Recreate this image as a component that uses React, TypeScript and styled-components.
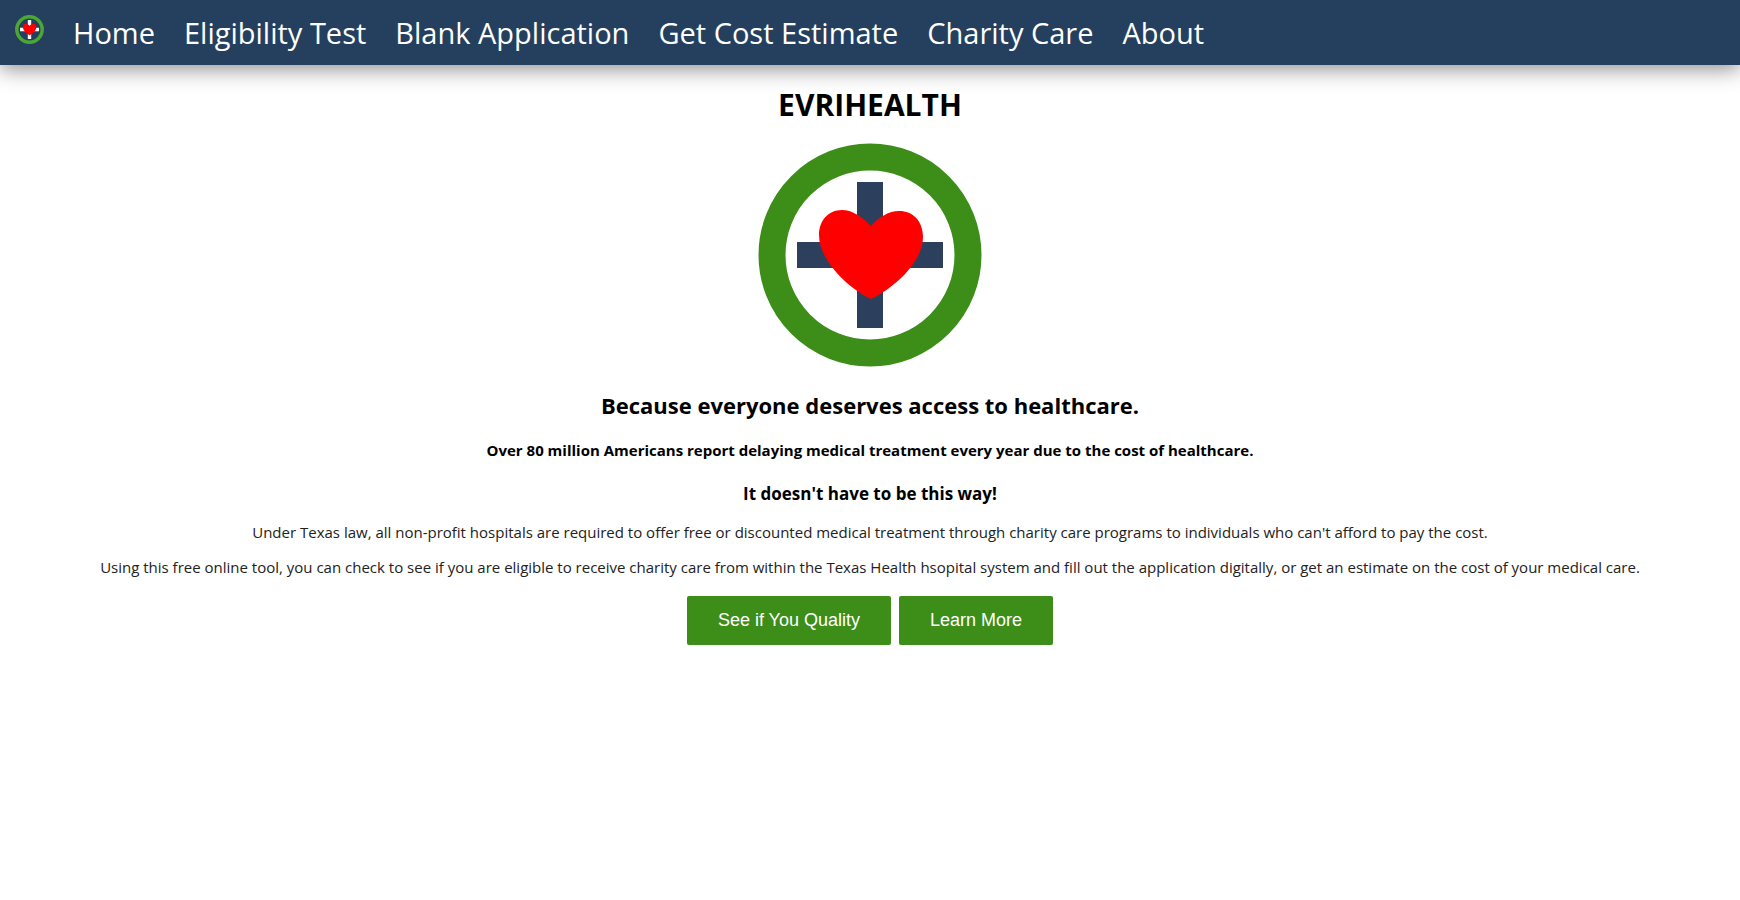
import React from "react";
import styled, { createGlobalStyle } from "styled-components";

const GlobalStyle = createGlobalStyle`
  body {
    margin: 0;
    background: #fff;
    color: #000;
    font-family: "Open Sans", sans-serif;
    font-size: 16px;
  }
`;

const NavBar = styled.nav`
  display: flex;
  align-items: center;
  height: 65px;
  padding: 0 15px;
  background: #24405e;
  box-shadow: 0 4px 20px rgba(0, 0, 0, 0.45);
`;

const BrandLink = styled.a`
  display: flex;
  margin: 0 29px 6px 0;
`;

const NavList = styled.ul`
  display: flex;
  gap: 29px;
  margin: 0;
  padding: 0;
  list-style: none;
`;

const NavLink = styled.a`
  color: #fff;
  font-size: 29px;
  line-height: 40px;
  text-decoration: none;
  white-space: nowrap;
`;

const Main = styled.main`
  display: flex;
  flex-direction: column;
  align-items: center;
  padding: 18px 8px;
  text-align: center;
`;

const Title = styled.h1`
  margin: 0 0 16px;
  font-size: 30px;
  line-height: 44px;
`;

const Tagline = styled.h2`
  margin: 23px 0 0;
  font-size: 22px;
  line-height: 30px;
`;

const Fact = styled.h4`
  margin: 19px 0 0;
  font-size: 15px;
  line-height: 22px;
`;

const Callout = styled.h3`
  margin: 19px 0 0;
  font-size: 17px;
  line-height: 27px;
`;

const Text = styled.p`
  margin: 15px 0 0;
  color: #222;
  font-size: 15px;
  line-height: 20px;
`;

const Actions = styled.div`
  display: flex;
  gap: 8px;
  margin-top: 19px;
`;

const ActionButton = styled.button`
  padding: 14px 31px;
  border: 0;
  border-radius: 2px;
  background: #3c8e18;
  color: #fff;
  font-family: "Liberation Sans", Arial, sans-serif;
  font-size: 18px;
  line-height: 21px;
  cursor: pointer;
`;

interface LogoProps {
  size: number;
  ring: string;
  cross: string;
}

function Logo({ size, ring, cross }: LogoProps) {
  return (
    <svg width={size} height={size} viewBox="0 0 224 224" role="img" aria-label="EvriHealth">
      <circle cx="112" cy="112" r="98" fill="none" stroke={ring} strokeWidth="27" />
      <path d="M99 39h26v146H99zM39 99h146v26H39z" fill={cross} />
      <path
        d="M113 83C103 73 94 67 84 67C70 67 61 78 61 92C61 116 88 144 113 156C138 144 165 118 165 94C165 78 155 68 141 68C131 68 121 74 113 83Z"
        fill="#f00"
      />
    </svg>
  );
}

const links = ["Home", "Eligibility Test", "Blank Application", "Get Cost Estimate", "Charity Care", "About"];

export default function App() {
  return (
    <>
      <GlobalStyle />
      <NavBar>
        <BrandLink href="#"><Logo size={29} ring="#4ca635" cross="#fff" /></BrandLink>
        <NavList>
          {links.map((label) => (
            <li key={label}><NavLink href="#">{label}</NavLink></li>
          ))}
        </NavList>
      </NavBar>
      <Main>
        <Title>EVRIHEALTH</Title>
        <Logo size={224} ring="#3c8e18" cross="#2c405e" />
        <Tagline>Because everyone deserves access to healthcare.</Tagline>
        <Fact>Over 80 million Americans report delaying medical treatment every year due to the cost of healthcare.</Fact>
        <Callout>It doesn't have to be this way!</Callout>
        <Text>Under Texas law, all non-profit hospitals are required to offer free or discounted medical treatment through charity care programs to individuals who can't afford to pay the cost.</Text>
        <Text>Using this free online tool, you can check to see if you are eligible to receive charity care from within the Texas Health hsopital system and fill out the application digitally, or get an estimate on the cost of your medical care.</Text>
        <Actions>
          <ActionButton type="button">See if You Quality</ActionButton>
          <ActionButton type="button">Learn More</ActionButton>
        </Actions>
      </Main>
    </>
  );
}
